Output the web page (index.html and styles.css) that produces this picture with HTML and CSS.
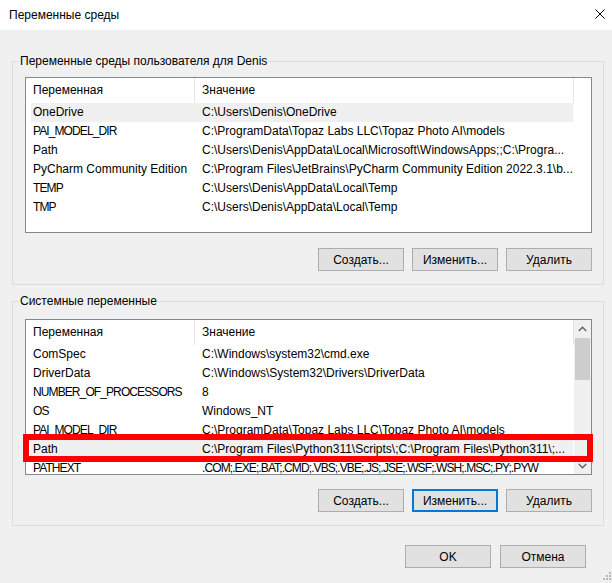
FILE: index.html
```html
<!DOCTYPE html>
<html lang="ru">
<head>
<meta charset="utf-8">
<title>Переменные среды</title>
<link rel="stylesheet" href="styles.css">
</head>
<body>
<div class="window">
  <div class="titlebar">
    <span class="title">Переменные среды</span>
    <svg class="close" width="10" height="10" viewBox="0 0 10 10"><path d="M0.5 0.5 L9.5 9.5 M9.5 0.5 L0.5 9.5" stroke="#000" stroke-width="1" fill="none"/></svg>
  </div>
  <div class="content">
    <fieldset class="group">
      <legend>Переменные среды пользователя для Denis</legend>
      <div class="group-inner top-user">
        <div class="list">
          <div class="list-main">
            <div class="list-header"><div class="hcell c1">Переменная</div><div class="hcell c2">Значение</div></div>
            <div class="row selected"><div class="cell c1">OneDrive</div><div class="cell c2">C:\Users\Denis\OneDrive</div></div>
            <div class="row"><div class="cell c1 caps">PAI_MODEL_DIR</div><div class="cell c2">C:\ProgramData\Topaz Labs LLC\Topaz Photo AI\models</div></div>
            <div class="row"><div class="cell c1">Path</div><div class="cell c2">C:\Users\Denis\AppData\Local\Microsoft\WindowsApps;;C:\Progra...</div></div>
            <div class="row"><div class="cell c1">PyCharm Community Edition</div><div class="cell c2">C:\Program Files\JetBrains\PyCharm Community Edition 2022.3.1\b...</div></div>
            <div class="row"><div class="cell c1 caps">TEMP</div><div class="cell c2">C:\Users\Denis\AppData\Local\Temp</div></div>
            <div class="row"><div class="cell c1 caps">TMP</div><div class="cell c2">C:\Users\Denis\AppData\Local\Temp</div></div>
          </div>
          <div class="list-side"></div>
        </div>
        <div class="btns btns-user">
          <button class="btn">Создать...</button>
          <button class="btn">Изменить...</button>
          <button class="btn">Удалить</button>
        </div>
      </div>
    </fieldset>

    <fieldset class="group group-sys">
      <legend>Системные переменные</legend>
      <div class="group-inner top-sys">
        <div class="list">
          <div class="list-main">
            <div class="list-header"><div class="hcell c1">Переменная</div><div class="hcell c2">Значение</div></div>
            <div class="row"><div class="cell c1">ComSpec</div><div class="cell c2">C:\Windows\system32\cmd.exe</div></div>
            <div class="row"><div class="cell c1">DriverData</div><div class="cell c2">C:\Windows\System32\Drivers\DriverData</div></div>
            <div class="row"><div class="cell c1 caps">NUMBER_OF_PROCESSORS</div><div class="cell c2">8</div></div>
            <div class="row"><div class="cell c1 caps">OS</div><div class="cell c2">Windows_NT</div></div>
            <div class="row"><div class="cell c1 caps">PAI_MODEL_DIR</div><div class="cell c2">C:\ProgramData\Topaz Labs LLC\Topaz Photo AI\models</div></div>
            <div class="row selected"><div class="cell c1">Path</div><div class="cell c2">C:\Program Files\Python311\Scripts\;C:\Program Files\Python311\;...</div></div>
            <div class="row"><div class="cell c1 caps">PATHEXT</div><div class="cell c2 caps">.COM;.EXE;.BAT;.CMD;.VBS;.VBE;.JS;.JSE;.WSF;.WSH;.MSC;.PY;.PYW</div></div>
          </div>
          <div class="list-side scrollbar">
            <div class="sb-btn"><svg width="9" height="6" viewBox="0 0 9 6"><polyline points="0.8,5 4.5,1.3 8.2,5" fill="none" stroke="#606060" stroke-width="1.4"/></svg></div>
            <div class="sb-track"><div class="sb-thumb"></div></div>
            <div class="sb-btn"><svg width="9" height="6" viewBox="0 0 9 6"><polyline points="0.8,1 4.5,4.7 8.2,1" fill="none" stroke="#606060" stroke-width="1.4"/></svg></div>
          </div>
          <div class="highlight"></div>
        </div>
        <div class="btns btns-sys">
          <button class="btn">Создать...</button>
          <button class="btn focused">Изменить...</button>
          <button class="btn">Удалить</button>
        </div>
      </div>
    </fieldset>

    <div class="dialog-btns">
      <button class="btn">OK</button>
      <button class="btn">Отмена</button>
    </div>
  </div>
  <svg class="grip" width="8" height="8" viewBox="0 0 8 8">
    <rect x="6" y="0" width="2" height="2" fill="#b8b8b8"/>
    <rect x="3" y="3" width="2" height="2" fill="#b8b8b8"/>
    <rect x="6" y="3" width="2" height="2" fill="#b8b8b8"/>
    <rect x="0" y="6" width="2" height="2" fill="#b8b8b8"/>
    <rect x="3" y="6" width="2" height="2" fill="#b8b8b8"/>
    <rect x="6" y="6" width="2" height="2" fill="#b8b8b8"/>
  </svg>
</div>
</body>
</html>
```

FILE: styles.css
```css
* { box-sizing: border-box; }

html, body {
  margin: 0;
  padding: 0;
  background: #f0f0f0;
}

body {
  font-family: "Liberation Sans", Arial, sans-serif;
  font-size: 12px;
  color: #000;
}

.window {
  position: relative;
  width: 612px;
  height: 583px;
  background: #f0f0f0;
  overflow: hidden;
}

.titlebar {
  height: 30px;
  background: #fff;
  display: flex;
  align-items: center;
  justify-content: space-between;
  padding: 0 7px 0 9px;
}

.title {
  line-height: 30px;
}

.close {
  align-self: flex-start;
  margin-top: 9px;
  display: block;
}

.content {
  padding: 24px 8px 0 12px;
}

.group {
  margin: 0;
  padding: 0;
  border: 1px solid #dcdcdc;
  min-width: 0;
}

.group legend {
  margin-left: 6px;
  padding: 0 1px;
  line-height: 15px;
}

.group-sys {
  margin-top: 9px;
}

.group-inner {
  padding: 8px 11px 13px 12px;
}

.group-inner.top-sys {
  padding-top: 10px;
}

.list {
  position: relative;
  height: 156px;
  border: 1px solid #828790;
  background: #fff;
  display: flex;
}

.list-main {
  width: 548px;
  overflow: hidden;
}

.list-side {
  width: 17px;
}

.list-header {
  display: flex;
  height: 25px;
  margin-left: 5px;
  width: 543px;
}

.hcell {
  line-height: 25px;
  border-right: 1px solid #e5e5e5;
  white-space: nowrap;
}

.hcell.c1 { width: 164px; padding-left: 2px; }
.hcell.c2 { width: 379px; padding-left: 7px; }

.row {
  display: flex;
  height: 19px;
  margin-left: 5px;
  width: 542px;
}

.row.selected {
  background: #f0f0f0;
}

.cell {
  line-height: 19px;
  white-space: nowrap;
  overflow: hidden;
}

.cell.c1 { width: 164px; padding-left: 2px; }
.cell.c2 { flex: 1; padding-left: 7px; }

.cell.caps {
  letter-spacing: -0.9px;
}

.scrollbar {
  background: #f0f0f0;
  display: flex;
  flex-direction: column;
}

.sb-btn {
  height: 17px;
  display: flex;
  align-items: center;
  justify-content: center;
}

.sb-btn svg { display: block; }

.sb-track {
  flex: 1;
  padding: 1px 1px 0 1px;
}

.sb-thumb {
  height: 42px;
  background: #cdcdcd;
}

.highlight {
  position: absolute;
  left: -3px;
  top: 114px;
  width: 570px;
  height: 28px;
  border: 6px solid #ff0000;
  pointer-events: none;
}

.btns {
  display: flex;
  justify-content: flex-end;
  gap: 8px;
  margin-top: 15px;
}

.btns-sys {
  margin-top: 14px;
}

.btn {
  width: 86px;
  height: 23px;
  padding: 0;
  margin: 0;
  font-family: "Liberation Sans", Arial, sans-serif;
  font-size: 12px;
  color: #000;
  background: #e1e1e1;
  border: 1px solid #adadad;
  border-radius: 0;
}

.btn.focused {
  border: 2px solid #0078d7;
}

.dialog-btns {
  display: flex;
  justify-content: flex-end;
  gap: 9px;
  margin-top: 19px;
  padding-right: 18px;
}

.grip {
  position: absolute;
  right: 1px;
  bottom: 3px;
  display: block;
}
```
